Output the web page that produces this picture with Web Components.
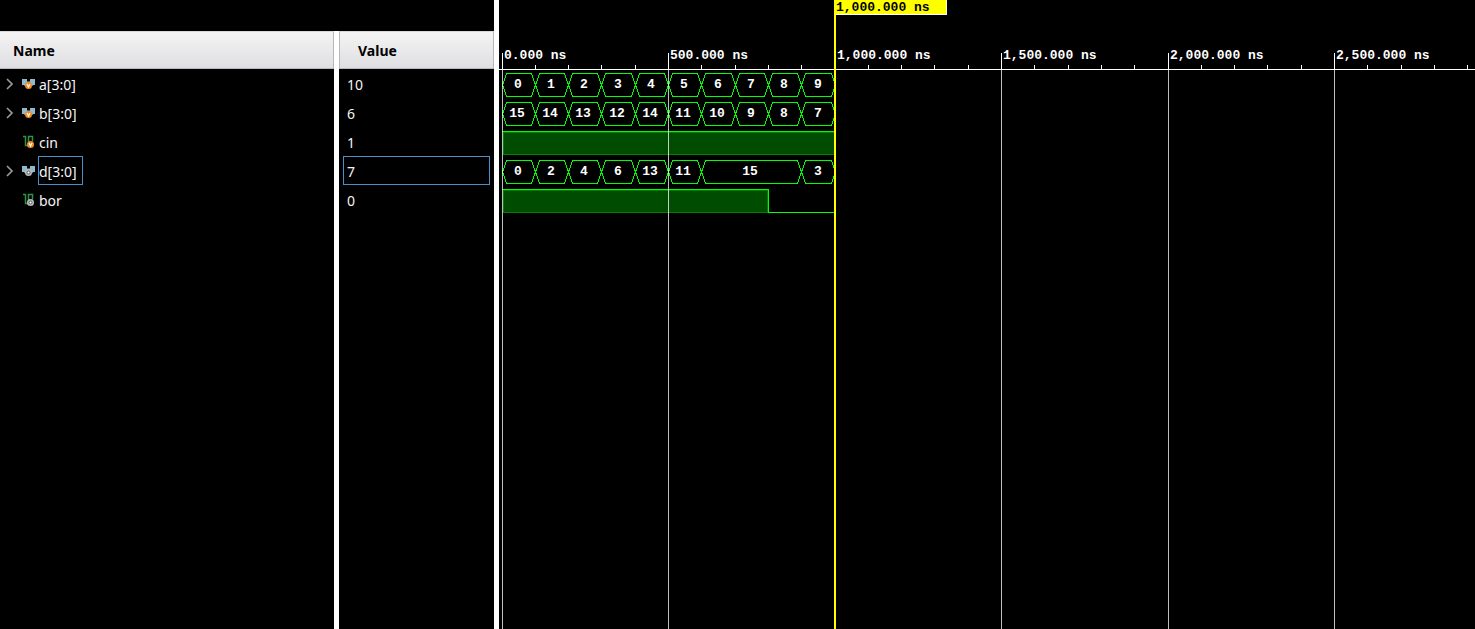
<!DOCTYPE html>
<html lang="en">
<head>
<meta charset="utf-8">
<title>Waveform viewer</title>
<style>
html, body { margin: 0; height: 100%; background: #000; overflow: hidden; }
</style>
</head>
<body>
<wave-window></wave-window>
<script>
const SIGNALS = [
  { name: 'a[3:0]', value: '10', kind: 'bus', dir: 'in', spans: [[0,100,'0'],[100,200,'1'],[200,300,'2'],[300,400,'3'],[400,500,'4'],[500,600,'5'],[600,700,'6'],[700,800,'7'],[800,900,'8'],[900,1000,'9']] },
  { name: 'b[3:0]', value: '6', kind: 'bus', dir: 'in', spans: [[0,100,'15'],[100,200,'14'],[200,300,'13'],[300,400,'12'],[400,500,'14'],[500,600,'11'],[600,700,'10'],[700,800,'9'],[800,900,'8'],[900,1000,'7']] },
  { name: 'cin', value: '1', kind: 'bit', dir: 'in', spans: [[0,1000,1]] },
  { name: 'd[3:0]', value: '7', kind: 'bus', dir: 'out', selected: true, spans: [[0,100,'0'],[100,200,'2'],[200,300,'4'],[300,400,'6'],[400,500,'13'],[500,600,'11'],[600,900,'15'],[900,1000,'3']] },
  { name: 'bor', value: '0', kind: 'bit', dir: 'out', spans: [[0,800,1],[800,1000,0]] },
];
// Zoom level of the time axis: 1000 ns take 333 px; time 0 sits 3 px into the view.
const toX = ns => 3 + Math.floor(ns * 333 / 1000);
const CURSOR_NS = 1000;

class SignalIcon extends HTMLElement {
  connectedCallback() {
    const input = this.getAttribute('dir') === 'in';
    const disc = input ? '#f28a1e' : '#b9b9b9';
    const mark = input
      ? '<path d="M-1.500 -1.500L0 1.500 1.500 -1.500" fill="none" stroke="#fff" stroke-width="1.200"/>'
      : '<circle r="1.500" fill="#fff" stroke="#555"/>';
    const badge = (x, y) => `<g transform="translate(${x} ${y})"><circle r="3.500" fill="${disc}"/>${mark}</g>`;
    const art = this.getAttribute('kind') === 'bus'
      ? `<path d="M0 2h5v2.500h3V2h5v6h-1.500L10 9H3L1.500 8H0z" fill="#90b8cc"/>${badge(6.5, 8.5)}`
      : `<path d="M1 1.500h2.500v9h3v-9h4v5" fill="none" stroke="#2f9247" stroke-width="1.500"/>${badge(8.5, 9.5)}`;
    this.attachShadow({ mode: 'open' }).innerHTML = `
      <style>:host { display: block; width: 13px; height: 13px; flex: none; } svg { display: block; overflow: visible; }</style>
      <svg width="13" height="13" aria-hidden="true">${art}</svg>`;
  }
}
customElements.define('signal-icon', SignalIcon);

class SignalColumn extends HTMLElement {
  connectedCallback() {
    const names = this.getAttribute('field') === 'name';
    const rows = SIGNALS.map(s => {
      const sel = s.selected ? ' selected' : '';
      return names
        ? `<tr><td><div class="name">${s.kind === 'bus'
            ? `<button aria-label="Expand ${s.name}"><svg width="8" height="12"><path d="M1 1l5 5-5 5" fill="none" stroke="#999" stroke-width="1.700"/></svg></button>`
            : '<span class="gap"></span>'}<signal-icon kind="${s.kind}" dir="${s.dir}"></signal-icon><span class="label${sel}">${s.name}</span></div></td></tr>`
        : `<tr><td><div class="value${sel}">${s.value}</div></td></tr>`;
    }).join('');
    this.attachShadow({ mode: 'open' }).innerHTML = `
      <style>
        :host { display: block; font: 14px/29px "Noto Sans", "Open Sans", sans-serif; color: #f5f5f5; background: #000; }
        table { width: 100%; border-collapse: separate; border-spacing: 0; }
        th, td { padding: 0; }
        th { box-sizing: border-box; height: 38px; line-height: 35px; text-align: left; color: #000;
             background: linear-gradient(#f4f4f4, #dfdfe3); border: 1px solid #b8b8b8; border-top-color: #d8d8d8; padding-left: ${names ? 13 : 18}px; }
        ${names ? 'th { border-left: 0; }' : ''}
        .name { display: flex; align-items: center; height: 29px; padding-left: 6px; }
        button, .gap { width: 8px; margin-right: 8px; flex: none; }
        button { display: block; height: 12px; padding: 0; border: 0; background: none; }
        svg { display: block; }
        .label, .value { box-sizing: border-box; height: 29px; border: 1px solid transparent; line-height: 29px; }
        .label { margin-left: 3px; padding-right: 5px; }
        .value { margin: 0 4px; padding-left: 3px; }
        .selected { border-color: #4a90c8; }
      </style>
      <table><thead><tr><th scope="col">${names ? 'Name' : 'Value'}</th></tr></thead><tbody>${rows}</tbody></table>`;
  }
}
customElements.define('signal-column', SignalColumn);

class TimeRuler extends HTMLElement {
  connectedCallback() {
    this.attachShadow({ mode: 'open' }).innerHTML = `
      <style>:host { display: block; height: 70px; } svg { display: block; width: 100%; height: 70px; fill: #fff; shape-rendering: crispEdges; }
      text { font: bold 13px "Liberation Mono", monospace; }</style>
      <svg></svg>`;
    this.draw();
    addEventListener('resize', () => this.draw());
  }
  // Ticks and labels cover only the visible stretch of time.
  draw() {
    const width = this.clientWidth;
    let art = '<rect y="69" width="100%" height="1"/>';
    for (let ns = 0; toX(ns) < width; ns += 100) {
      const x = toX(ns), major = ns % 500 === 0;
      art += `<rect x="${x}" y="${major ? 53 : 65}" width="1" height="${major ? 17 : 5}"/>`;
      if (major) art += `<text x="${x + 2}" y="59">${ns.toLocaleString('en-US')}.000 ns</text>`;
    }
    this.shadowRoot.querySelector('svg').innerHTML = art;
  }
}

class WaveTrace extends HTMLElement {
  connectedCallback() {
    const s = SIGNALS[+this.getAttribute('index')];
    let art = '';
    for (const [from, to, v] of s.spans) {
      const a = toX(from), b = toX(to);
      if (s.kind === 'bus') {
        art += `<path class="line" d="M${a + .5} 15L${a + 4.5} 3.500H${b - 3.5}L${b + .5} 15L${b - 3.5} 26.500H${a + 4.5}Z"/>
          <text x="${Math.floor((a + b) / 2) - (v.length > 1 ? 1 : 0)}" y="18">${v}</text>`;
      } else if (v) {
        art += `<rect x="${a + 1}" y="4" width="${b - a - 1}" height="23" fill="#004c00"/>
          <path class="edge" d="M${a + 1.5} 4.500H${b - .5}V26.500H${a + 1.5}Z"/><path class="line" d="M${a} 3.500H${b + 1}"/>`;
      } else {
        art += `<path class="line" d="M${a + .5} 3v23.500H${b}"/>`;
      }
    }
    this.attachShadow({ mode: 'open' }).innerHTML = `
      <style>:host { display: block; height: 29px; } svg { display: block; width: 100%; height: 29px; shape-rendering: crispEdges; }
      .line { fill: none; stroke: #0f0; } .edge { fill: none; stroke: #008000; }
      text { font: bold 13px "Liberation Mono", monospace; fill: #fff; text-anchor: middle; }</style>
      <svg>${art}</svg>`;
  }
}

class WaveView extends HTMLElement {
  connectedCallback() {
    let grid = '';
    for (let ns = 0; ns <= 12000; ns += 500) grid += `<rect x="${toX(ns)}" width="1" height="100%"/>`;
    this.attachShadow({ mode: 'open' }).innerHTML = `
      <style>
        :host { display: block; position: relative; overflow: hidden; background: #000; }
        .grid { position: absolute; inset: 70px 0 0; width: 100%; height: 100%; fill: rgba(255,255,255,.75); }
        .cursor { position: absolute; top: 0; bottom: 0; left: ${toX(CURSOR_NS) - 1}px; border-left: 2px solid #ff0; }
        .cursor span { display: block; box-sizing: border-box; width: 111px; height: 15px; border-bottom: 1px solid #fff; border-right: 1px solid #ffc;
          background: #ff0; color: #000; font: bold 13px/15px "Liberation Mono", monospace; white-space: nowrap; }
      </style>
      <time-ruler></time-ruler>
      ${SIGNALS.map((s, i) => `<wave-trace index="${i}"></wave-trace>`).join('')}
      <svg class="grid">${grid}</svg>
      <div class="cursor"><span>1,000.000 ns</span></div>`;
  }
}

class WaveWindow extends HTMLElement {
  connectedCallback() {
    this.attachShadow({ mode: 'open' }).innerHTML = `
      <style>
        :host { display: flex; height: 100vh; background: #000; }
        .signals { display: flex; flex: none; margin-top: 31px; }
        .names { width: 334px; } .values { width: 155px; }
        .splitter { width: 5px; flex: none; background: #fff; }
        wave-view { flex: 1; min-width: 0; }
      </style>
      <div class="signals">
        <signal-column class="names" field="name"></signal-column>
        <div class="splitter"></div>
        <signal-column class="values" field="value"></signal-column>
      </div>
      <div class="splitter"></div>
      <wave-view></wave-view>`;
  }
}
// Outer elements first, so that the ruler is in the laid-out page when it measures itself.
customElements.define('wave-window', WaveWindow);
customElements.define('wave-view', WaveView);
customElements.define('wave-trace', WaveTrace);
customElements.define('time-ruler', TimeRuler);
</script>
</body>
</html>
